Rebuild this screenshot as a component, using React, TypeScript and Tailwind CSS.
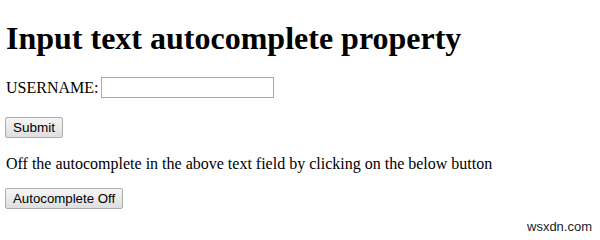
export default function App() {
  return (
    <div className="relative w-[600px] h-[240px] bg-white text-black overflow-hidden font-['Liberation_Serif',serif]">
      <div className="pl-[6px] pt-[20px] flex flex-col items-start">
        <h1 className="text-[32px] font-bold leading-[37px] m-0">Input text autocomplete property</h1>
        <div className="mt-[20px] flex items-center text-[16px] leading-[20px]">
          <span>USERNAME:</span>
          <input
            type="text"
            className="ml-[3px] w-[173px] h-[21px] border border-[#a9a9a9] bg-white outline-none"
          />
        </div>
        <button className="mt-[19px] -ml-px h-[21px] px-[7px] border border-[#adadad] rounded-[2px] bg-gradient-to-b from-[#f6f6f6] to-[#dedede] font-['Liberation_Sans',sans-serif] text-[13.5px] leading-[19px]">
          Submit
        </button>
        <p className="mt-[16px] text-[16px] leading-[20px]">
          Off the autocomplete in the above text field by clicking on the below button
        </p>
        <button className="mt-[14px] -ml-px h-[21px] px-[7px] border border-[#adadad] rounded-[2px] bg-gradient-to-b from-[#f6f6f6] to-[#dedede] font-['Liberation_Sans',sans-serif] text-[13.25px] leading-[19px]">
          Autocomplete Off
        </button>
      </div>
      <span className="absolute left-[527px] top-[219px] font-['Liberation_Sans',sans-serif] text-[13px] leading-[16px] text-[#222]">
        wsxdn.com
      </span>
    </div>
  );
}
